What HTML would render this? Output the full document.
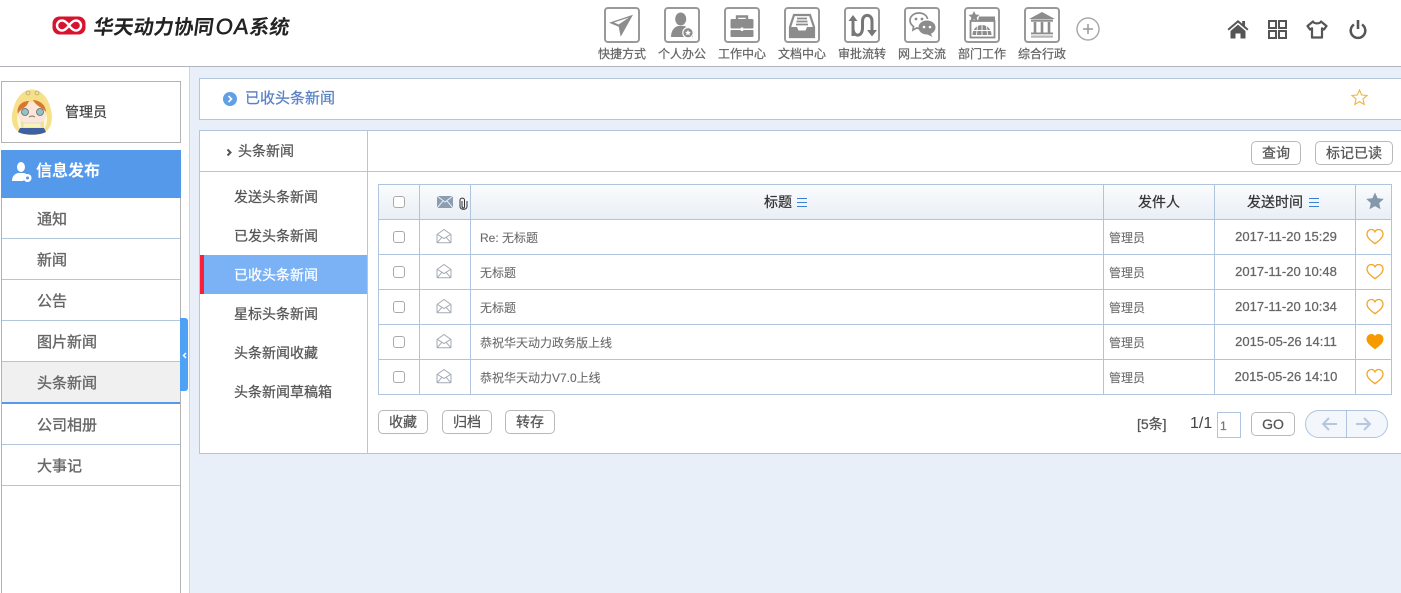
<!DOCTYPE html>
<html lang="zh"><head><meta charset="utf-8"><title>已收头条新闻</title>
<style>
html,body{margin:0;padding:0}
body{width:1401px;height:593px;position:relative;overflow:hidden;background:#e8eff9;font-family:"Liberation Sans","Noto Sans CJK SC",sans-serif;font-size:14px;color:#555;-webkit-text-stroke:.25px}
.a{position:absolute;box-sizing:border-box}
.t{position:absolute;white-space:nowrap;line-height:20px}
.lab{position:absolute;top:45px;width:60px;text-align:center;font-size:12px;line-height:18px;color:#666;white-space:nowrap}
.ib{position:absolute;top:7px;width:36px;height:36px;border:2px solid #999;border-radius:4px;box-sizing:border-box}
.ib svg{position:absolute;left:0;top:0;width:32px;height:32px}
.m{position:absolute;left:37px;font-size:15px;line-height:20px;color:#666;white-space:nowrap;-webkit-text-stroke:.35px}
.ml{position:absolute;left:2px;width:178px;height:1px;background:#b4c6dc}
.s{position:absolute;left:234px;font-size:14px;line-height:20px;color:#555;white-space:nowrap}
.btn{position:absolute;box-sizing:border-box;height:24px;border:1px solid #b9b9b9;border-radius:5px;background:#fff;text-align:center;font-size:14px;line-height:22px;color:#555;white-space:nowrap}
.h{position:absolute;height:1px;left:378px;width:1014px;background:#b0c4de}
.v{position:absolute;top:184px;height:211px;width:1px;background:#b0c4de}
.cb{position:absolute;left:393px;width:12px;height:12px;border:1px solid #aaa;border-radius:3px;box-sizing:border-box;background:#fff}
.tt{position:absolute;left:480px;font-size:12px;line-height:18px;color:#6a6a6a;white-space:nowrap;-webkit-text-stroke:.1px}
.fr{position:absolute;left:1109px;font-size:12px;line-height:18px;color:#6a6a6a;-webkit-text-stroke:.1px}
.dt{position:absolute;left:1215px;width:142px;text-align:center;font-size:13px;line-height:18px;color:#666}
.env{position:absolute;left:436px;width:16px;height:16px}
.hrt{position:absolute;left:1366px;width:18px;height:17px}
.th{position:absolute;top:192px;font-size:14px;line-height:20px;color:#333;text-align:center;white-space:nowrap}
</style></head><body>
<svg width="0" height="0" style="position:absolute"><defs>
<symbol id="env" viewBox="0 0 16 16"><path d="M1 6.500 8 1.500l7 5v7.500a.8.8 0 0 1-.8.8H1.800a.8.8 0 0 1-.8-.8z M1.500 6.500 8 10.500l6.500-4 M1.500 14.300 6 9.200 M14.500 14.300 10 9.200" fill="none" stroke="#a3aab4" stroke-width="1"/></symbol>
<symbol id="ho" viewBox="0 0 18 17"><path d="M9 15.700C6 13.300 1 10.300 1 6 1 3.300 3 1.500 5.200 1.500 6.900 1.500 8.300 2.400 9 3.800 9.700 2.400 11.100 1.500 12.800 1.500 15 1.500 17 3.300 17 6c0 4.300-5 7.300-8 9.700z" fill="none" stroke="#f4a52a" stroke-width="1.300"/></symbol>
<symbol id="hf" viewBox="0 0 18 17"><path d="M9 15.700C6 13.300 1 10.300 1 6 1 3.300 3 1.500 5.200 1.500 6.900 1.500 8.300 2.400 9 3.800 9.700 2.400 11.100 1.500 12.800 1.500 15 1.500 17 3.300 17 6c0 4.300-5 7.300-8 9.700z" fill="#f79a00" stroke="#f79a00"/></symbol>
</defs></svg>

<!-- header -->
<div class="a" style="left:0;top:0;width:1401px;height:67px;background:#fff;border-bottom:1px solid #b1b4bc"></div>
<svg class="a" style="left:52px;top:16px" width="34" height="19" viewBox="0 0 34 19"><rect x="0.500" y="0.500" width="33" height="18" rx="7" fill="#d8132f"/><path d="M17 9.500C14.500 6 12.500 4.500 10 4.500a5 5 0 0 0 0 10c2.500 0 4.500-1.500 7-5C19.500 6 21.500 4.500 24 4.500a5 5 0 0 1 0 10c-2.500 0-4.500-1.500-7-5z" fill="none" stroke="#fff" stroke-width="2.400"/></svg>
<div class="t" style="left:92px;top:13px;font-size:20px;line-height:26px;font-weight:bold;color:#222;transform:skewX(-8deg);transform-origin:left bottom;font-family:'Noto Sans CJK SC','Liberation Sans',sans-serif;letter-spacing:0;-webkit-text-stroke:0">华天动力协同<span style="font-family:'Liberation Sans';font-weight:normal;font-size:22px;letter-spacing:1px;margin-left:2px;-webkit-text-stroke:.5px">OA</span>系统</div>

<div class="ib" style="left:604px"><svg viewBox="0 0 32 32"><path d="M27 5.700 3 13.700l9.700 4 2 10z" fill="#8c8c8c"/><path d="M23 8.500 8 13.500l4.700 2z" fill="#fff"/></svg></div>
<div class="ib" style="left:664px"><svg viewBox="0 0 32 32"><ellipse cx="14.700" cy="10" rx="5.500" ry="6.500" fill="#8c8c8c"/><path d="M5 28c0-6 3-10 7-11h6c4 1 8 5 9 11z" fill="#8c8c8c"/><circle cx="22" cy="23.700" r="5.200" fill="#8c8c8c" stroke="#fff" stroke-width="1.200"/><path d="m22 20.900.9 1.900 2 .2-1.500 1.400.4 2-1.800-1-1.800 1 .4-2-1.500-1.400 2-.2z" fill="#fff"/></svg></div>
<div class="ib" style="left:724px"><svg viewBox="0 0 32 32"><path d="M11 11V7.500h10V11" fill="none" stroke="#8c8c8c" stroke-width="2.400"/><rect x="4.500" y="10" width="23" height="9.500" rx="1.500" fill="#8c8c8c"/><rect x="4.500" y="21" width="23" height="7" rx="1" fill="#8c8c8c"/><rect x="14.800" y="18.500" width="2.400" height="3.500" fill="#fff"/></svg></div>
<div class="ib" style="left:784px"><svg viewBox="0 0 32 32"><path d="M8 6h16l4 12v10H4V18z" fill="none" stroke="#8c8c8c" stroke-width="2.200"/><path d="M11 9.500h10M10.500 12.500h11M10 15.500h12" stroke="#8c8c8c" stroke-width="1.700"/><path d="M3 18h8l1.500 3.500h7L21 18h8v10H3z" fill="#8c8c8c"/></svg></div>
<div class="ib" style="left:844px"><svg viewBox="0 0 32 32"><path d="M7 27V9" fill="none" stroke="#777" stroke-width="3"/><path d="M2.500 12 7 6l4.500 6z" fill="#777"/><path d="M7 19c0 9.500 9.500 9.500 9.500 0v-7c0-7.500 9.500-7.500 9.500 0v10" fill="none" stroke="#777" stroke-width="3"/><path d="M21 21l5 6.500 5-6.500z" fill="#777"/></svg></div>
<div class="ib" style="left:904px"><svg viewBox="0 0 32 32"><path d="M13 4C7.500 4 4 7.500 4 11.500c0 2.500 1.500 4.500 3.500 6L7 21l3.500-2c1 .3 2 .4 3 .4" fill="none" stroke="#8c8c8c" stroke-width="1.700"/><path d="M13 4c4.500 0 8 2.500 8.500 6" fill="none" stroke="#8c8c8c" stroke-width="1.700"/><circle cx="10" cy="10" r="1.400" fill="#8c8c8c"/><circle cx="16" cy="10" r="1.400" fill="#8c8c8c"/><ellipse cx="21" cy="18.500" rx="8.500" ry="7" fill="#8c8c8c"/><path d="M24 23l2.500 5-6-3z" fill="#8c8c8c"/><circle cx="18" cy="18" r="1.300" fill="#fff"/><circle cx="24" cy="18" r="1.300" fill="#fff"/></svg></div>
<div class="ib" style="left:964px"><svg viewBox="0 0 32 32"><path d="m8 2 1.700 3.500 3.800.4-2.800 2.600.8 3.800L8 10.400 4.500 12.300l.8-3.800-2.800-2.600 3.800-.4z" fill="#8c8c8c"/><path d="M13 7.500h16v4H12z" fill="#8c8c8c"/><rect x="4.500" y="12" width="24" height="16.500" fill="none" stroke="#8c8c8c" stroke-width="1.800"/><path d="M6.500 26a9.500 10 0 0 1 19 0z" fill="#8c8c8c"/><path d="M6.500 21.500h19M16 16v10M11.500 17 10.500 26M20.500 17 21.500 26" stroke="#fff" stroke-width=".9"/></svg></div>
<div class="ib" style="left:1024px"><svg viewBox="0 0 32 32"><path d="M16 3 29 10H3z" fill="#8c8c8c"/><rect x="5" y="10.500" width="22" height="2.200" fill="#8c8c8c"/><path d="M9 13v11M16 13v11M23 13v11" stroke="#8c8c8c" stroke-width="2.600"/><rect x="5" y="23.500" width="22" height="1.800" fill="#8c8c8c"/><rect x="5" y="26.500" width="22" height="2.200" fill="#b5b5b5"/></svg></div>

<div class="lab" style="left:592px">快捷方式</div>
<div class="lab" style="left:652px">个人办公</div>
<div class="lab" style="left:712px">工作中心</div>
<div class="lab" style="left:772px">文档中心</div>
<div class="lab" style="left:832px">审批流转</div>
<div class="lab" style="left:892px">网上交流</div>
<div class="lab" style="left:952px">部门工作</div>
<div class="lab" style="left:1012px">综合行政</div>

<svg class="a" style="left:1076px;top:17px" width="24" height="24" viewBox="0 0 24 24"><circle cx="12" cy="12" r="11" fill="none" stroke="#aaa" stroke-width="1.500"/><path d="M12 7v10M7 12h10" stroke="#999" stroke-width="1.500"/></svg>
<svg class="a" style="left:1227px;top:19px" width="22" height="20" viewBox="0 0 22 20"><path d="M11 1 0.500 10l1.300 1.500L11 3.600l9.200 7.900 1.300-1.500-3.500-3V2h-2.800v2.700z" fill="#555"/><path d="M3.500 12 11 5.600l7.500 6.400v7.500h-5v-5h-5v5h-5z" fill="#555"/></svg>
<svg class="a" style="left:1268px;top:20px" width="19" height="19" viewBox="0 0 19 19"><path d="M1 1h7v7H1zM11 1h7v7h-7zM1 11h7v7H1zM11 11h7v7h-7z" fill="none" stroke="#555" stroke-width="2"/></svg>
<svg class="a" style="left:1306px;top:20px" width="22" height="19" viewBox="0 0 22 19"><path d="M7 1.500 1.500 6l2.500 3.500 2-1.200v9.200h10V8.300l2 1.200L20.500 6 15 1.500c-1 2.500-7 2.500-8 0z" fill="none" stroke="#555" stroke-width="2.200" stroke-linejoin="round"/></svg>
<svg class="a" style="left:1349px;top:19px" width="18" height="21" viewBox="0 0 18 21"><path d="M5 5.500a7.300 7.300 0 1 0 8 0" fill="none" stroke="#555" stroke-width="2.500"/><path d="M9 1v9" stroke="#555" stroke-width="2.600"/></svg>

<!-- left panel -->
<div class="a" style="left:0;top:67px;width:190px;height:526px;background:#fff;border-right:1px solid #c9d6e8"></div>
<div class="a" style="left:1px;top:81px;width:180px;height:62px;border:1px solid #b3b3b3"></div>
<svg class="a" style="left:10px;top:88px" width="44" height="48" viewBox="0 0 44 48"><path d="M22 1.500C12 2 6 10 3 22c-2.500 9-1 18 6 22 8 4 19 4 26 0 7-4 8-14 6-22C38.500 10 32 2 22 1.500z" fill="#f6e08a"/><path d="M8 25c-2 6 0 14 3 17 0-6 0-13-3-17zM36 25c2 6 1 13-2 16 0-6-1-12 2-16z" fill="#fff7d8"/><circle cx="18" cy="5" r="2" fill="#f6e08a" stroke="#997" stroke-width=".6"/><circle cx="27" cy="5" r="2" fill="#f6e08a" stroke="#997" stroke-width=".6"/><path d="M9 19c3-6 21-7 26 0l1 8c-1 7-6 9-14 9S9 33 8 27z" fill="#fbe6d8"/><path d="M8 26c-2-8 4-13 11-13l-2 4c-2 3-7 4-9 9zM23 12c5 0 13 4 13 12-3-4-10-6-13-12z" fill="#d9762f"/><circle cx="15" cy="24" r="3.500" fill="#8ec3c9" stroke="#666" stroke-width=".8"/><circle cx="30" cy="24" r="3.500" fill="#8ec3c9" stroke="#666" stroke-width=".8"/><path d="M19 29q3-2 6 0" stroke="#776" fill="none"/><path d="M13 35h18v5H13z" fill="#fbf4b5" stroke="#ddd"/><path d="M10 40h24l2 4c-6 3.500-22 3.500-28 0z" fill="#3f5fa0"/></svg>
<div class="t" style="left:65px;top:102px;font-size:14px;color:#444">管理员</div>
<div class="a" style="left:1px;top:150px;width:180px;height:48px;background:#5599ea"></div>
<svg class="a" style="left:12px;top:161px" width="20" height="22" viewBox="0 0 20 22"><ellipse cx="9" cy="6" rx="4" ry="5" fill="#fff"/><path d="M0 20c0-4 2-7 6-8h6c2 .5 3 1.500 4 3l-5 5z" fill="#fff"/><circle cx="15.500" cy="17" r="4" fill="#fff"/><circle cx="15.500" cy="17" r="1.500" fill="#5599ea"/></svg>
<div class="t" style="left:36px;top:158px;font-size:16px;line-height:22px;color:#fff;font-family:'Noto Sans CJK SC',sans-serif;font-weight:bold;-webkit-text-stroke:0">信息发布</div>

<div class="a" style="left:1px;top:198px;width:1px;height:395px;background:#b3b3b3"></div>
<div class="a" style="left:180px;top:198px;width:1px;height:395px;background:#b3b3b3"></div>
<div class="a" style="left:2px;top:362px;width:178px;height:40px;background:#f0f0f0"></div>
<div class="ml" style="top:238px"></div><div class="ml" style="top:279px"></div><div class="ml" style="top:320px"></div><div class="ml" style="top:361px"></div>
<div class="a" style="left:2px;top:402px;width:178px;height:2px;background:#5599ea"></div>
<div class="ml" style="top:444px"></div><div class="ml" style="top:485px"></div>
<div class="m" style="top:210px">通知</div>
<div class="m" style="top:251px">新闻</div>
<div class="m" style="top:292px">公告</div>
<div class="m" style="top:333px">图片新闻</div>
<div class="m" style="top:374px">头条新闻</div>
<div class="m" style="top:416px">公司相册</div>
<div class="m" style="top:457px">大事记</div>
<div class="a" style="left:180px;top:318px;width:8px;height:73px;background:#4fa1f6;border-radius:0 3px 3px 0"></div>
<svg class="a" style="left:181px;top:351px" width="7" height="9" viewBox="0 0 7 9"><path d="M5 2 2.500 4.500 5 7" fill="none" stroke="#fff" stroke-width="1.500"/></svg>

<!-- title bar -->
<div class="a" style="left:199px;top:78px;width:1202px;height:42px;background:#fff;border:1px solid #b4c6dc;border-right:none"></div>
<svg class="a" style="left:223px;top:92px" width="14" height="14" viewBox="0 0 14 14"><circle cx="7" cy="7" r="7" fill="#60a0e6"/><path d="M5.500 4 8.500 7l-3 3" fill="none" stroke="#fff" stroke-width="1.600"/></svg>
<div class="t" style="left:245px;top:89px;font-size:15px;line-height:20px;color:#5a82c4">已收头条新闻</div>
<svg class="a" style="left:1351px;top:89px" width="17" height="17" viewBox="0 0 17 17"><path d="m8.500 1 2.200 5 5.300.5-4 3.500 1.200 5.400-4.700-2.800-4.700 2.800L5 10 1 6.500 6.300 6z" fill="none" stroke="#f6b23c" stroke-width="1.100"/></svg>

<!-- content -->
<div class="a" style="left:199px;top:130px;width:1202px;height:324px;background:#fff;border:1px solid #b4c6dc;border-right:none"></div>
<div class="a" style="left:367px;top:131px;width:1px;height:322px;background:#b4c6dc"></div>
<div class="a" style="left:200px;top:171px;width:1201px;height:1px;background:#b4c6dc"></div>
<svg class="a" style="left:226px;top:148px" width="7" height="9" viewBox="0 0 7 9"><path d="M1.500 1.500 4.500 4.500 1.500 7.500" fill="none" stroke="#555" stroke-width="2"/></svg>
<div class="t" style="left:238px;top:141px;font-size:14px;color:#555">头条新闻</div>
<div class="a" style="left:200px;top:255px;width:167px;height:39px;background:#7bb2f6"></div>
<div class="a" style="left:200px;top:255px;width:4px;height:39px;background:#fa1e38"></div>
<div class="s" style="top:187px">发送头条新闻</div>
<div class="s" style="top:226px">已发头条新闻</div>
<div class="s" style="top:265px;color:#fff">已收头条新闻</div>
<div class="s" style="top:304px">星标头条新闻</div>
<div class="s" style="top:343px">头条新闻收藏</div>
<div class="s" style="top:382px">头条新闻草稿箱</div>

<div class="btn" style="left:1251px;top:141px;width:50px">查询</div>
<div class="btn" style="left:1315px;top:141px;width:78px">标记已读</div>

<!-- table -->
<div class="a" style="left:378px;top:184px;width:1014px;height:35px;background:linear-gradient(#fbfcfd,#e9eff6)"></div>
<div class="h" style="top:184px"></div><div class="h" style="top:219px"></div><div class="h" style="top:254px"></div><div class="h" style="top:289px"></div><div class="h" style="top:324px"></div><div class="h" style="top:359px"></div><div class="h" style="top:394px"></div>
<div class="v" style="left:378px"></div><div class="v" style="left:419px"></div><div class="v" style="left:470px"></div><div class="v" style="left:1103px"></div><div class="v" style="left:1214px"></div><div class="v" style="left:1355px"></div><div class="v" style="left:1391px"></div>

<div class="cb" style="top:196px"></div>
<svg class="a" style="left:437px;top:196px" width="16" height="12" viewBox="0 0 16 12"><rect width="16" height="12" fill="#8c9db2"/><path d="M0 0 8 6l8-6M0 12l6-7M16 12l-6-7" fill="none" stroke="#e8eef5" stroke-width="1"/></svg>
<svg class="a" style="left:459px;top:197px" width="9" height="13" viewBox="0 0 9 13"><path d="M3 4v5.500c0 2 2.500 2 2.500 0V3C5.500.5 1 .5 1 3v6.500c0 3.700 7 3.700 7 0V4" fill="none" stroke="#333" stroke-width="1"/></svg>
<div class="th" style="left:764px">标题</div>
<svg class="a" style="left:797px;top:198px" width="10" height="9" viewBox="0 0 10 9"><path d="M0 .5h10M0 4.500h10M0 8.500h10" stroke="#3d7fd0" stroke-width="1"/></svg>
<div class="th" style="left:1138px">发件人</div>
<div class="th" style="left:1247px">发送时间</div>
<svg class="a" style="left:1309px;top:198px" width="10" height="9" viewBox="0 0 10 9"><path d="M0 .5h10M0 4.500h10M0 8.500h10" stroke="#3d7fd0" stroke-width="1"/></svg>
<svg class="a" style="left:1366px;top:192px" width="18" height="18" viewBox="0 0 18 18"><path d="m9 .5 2.600 5.700 6.200.7-4.600 4.200 1.300 6.100L9 14.100l-5.500 3.100 1.300-6.100L.2 6.900l6.200-.7z" fill="#8597ac"/></svg>

<div class="cb" style="top:231px"></div><div class="cb" style="top:266px"></div><div class="cb" style="top:301px"></div><div class="cb" style="top:336px"></div><div class="cb" style="top:371px"></div>
<svg class="env" style="top:228px"><use href="#env"/></svg>
<svg class="env" style="top:263px"><use href="#env"/></svg>
<svg class="env" style="top:298px"><use href="#env"/></svg>
<svg class="env" style="top:333px"><use href="#env"/></svg>
<svg class="env" style="top:368px"><use href="#env"/></svg>

<div class="tt" style="top:229px">Re: 无标题</div>
<div class="tt" style="top:264px">无标题</div>
<div class="tt" style="top:299px">无标题</div>
<div class="tt" style="top:334px">恭祝华天动力政务版上线</div>
<div class="tt" style="top:369px">恭祝华天动力V7.0上线</div>
<div class="fr" style="top:229px">管理员</div>
<div class="fr" style="top:264px">管理员</div>
<div class="fr" style="top:299px">管理员</div>
<div class="fr" style="top:334px">管理员</div>
<div class="fr" style="top:369px">管理员</div>
<div class="dt" style="top:228px">2017-11-20 15:29</div>
<div class="dt" style="top:263px">2017-11-20 10:48</div>
<div class="dt" style="top:298px">2017-11-20 10:34</div>
<div class="dt" style="top:333px">2015-05-26 14:11</div>
<div class="dt" style="top:368px">2015-05-26 14:10</div>
<svg class="hrt" style="top:228px"><use href="#ho"/></svg>
<svg class="hrt" style="top:263px"><use href="#ho"/></svg>
<svg class="hrt" style="top:298px"><use href="#ho"/></svg>
<svg class="hrt" style="top:333px"><use href="#hf"/></svg>
<svg class="hrt" style="top:368px"><use href="#ho"/></svg>

<!-- footer controls -->
<div class="btn" style="left:378px;top:410px;width:50px">收藏</div>
<div class="btn" style="left:442px;top:410px;width:50px">归档</div>
<div class="btn" style="left:505px;top:410px;width:50px">转存</div>
<div class="t" style="left:1137px;top:414px;font-size:14px;color:#555">[5条]</div>
<div class="t" style="left:1190px;top:414px;font-size:16px;color:#444;-webkit-text-stroke:0">1/1</div>
<div class="a" style="left:1217px;top:412px;width:24px;height:26px;border:1px solid #b0c4de;background:#fff;font-size:12px;line-height:26px;padding-left:2px;color:#777">1</div>
<div class="btn" style="left:1251px;top:412px;width:44px;color:#555">GO</div>
<div class="a" style="left:1305px;top:410px;width:83px;height:28px;border:1px solid #b0c4de;border-radius:14px;background:#f3f7fc"></div>
<div class="a" style="left:1346px;top:410px;width:1px;height:28px;background:#b0c4de"></div>
<svg class="a" style="left:1321px;top:416px" width="17" height="16" viewBox="0 0 17 16"><path d="M16 8H2M8 2 2 8l6 6" fill="none" stroke="#b5c7de" stroke-width="2"/></svg>
<svg class="a" style="left:1355px;top:416px" width="17" height="16" viewBox="0 0 17 16"><path d="M1 8h14M9 2l6 6-6 6" fill="none" stroke="#b5c7de" stroke-width="2"/></svg>
</body></html>
